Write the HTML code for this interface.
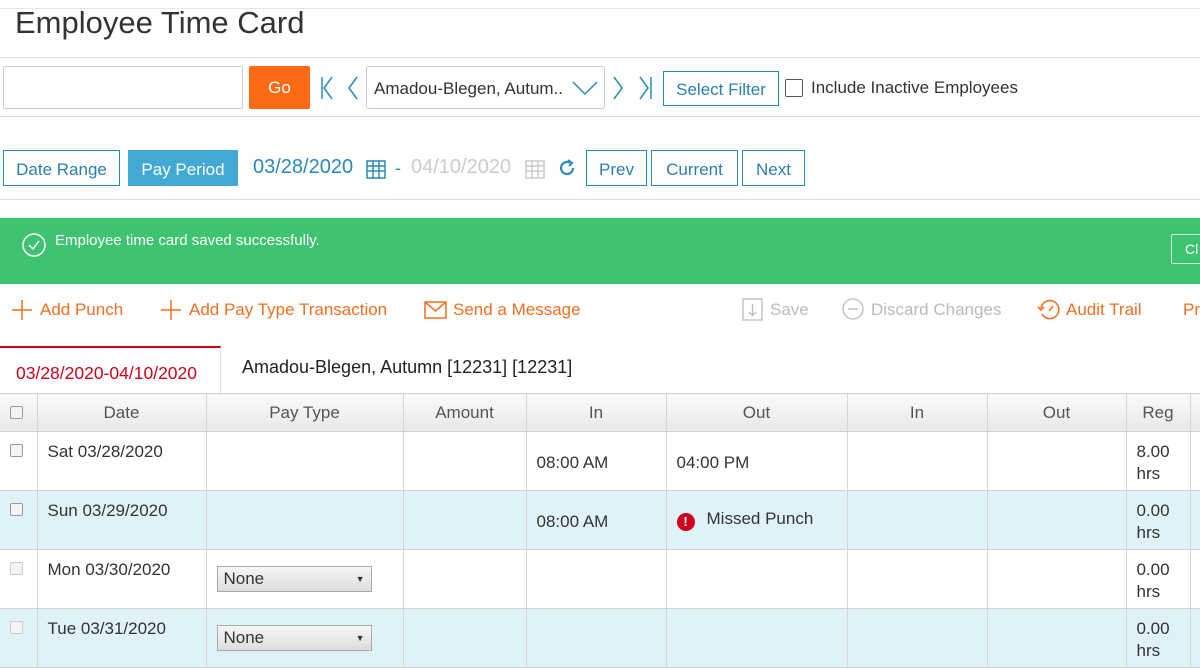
<!DOCTYPE html>
<html><head><style>
*{box-sizing:border-box;margin:0;padding:0}
body{width:1200px;height:669px;overflow:hidden;background:#fff;font-family:"Liberation Sans",sans-serif;position:relative;color:#333}
.a{position:absolute}
.btn{position:absolute;border:1px solid #2a8ab6;color:#2a7fab;font-size:17px;display:flex;align-items:center;justify-content:center;background:#fff;padding-top:3px}
.o{color:#f36f21;font-size:17px;position:absolute;top:300px}
.g{color:#bbb;font-size:17px;position:absolute;top:300px}
table{position:absolute;left:0;top:393px;border-collapse:collapse;width:1200px;table-layout:fixed}
td,th{border:1px solid #d4d4d4;font-size:17px;font-weight:normal;vertical-align:top;padding:9px 10px 0;line-height:22px}
th{height:38px;background:linear-gradient(#fafafa,#e8e8e8);color:#555;text-align:center;vertical-align:middle;padding:0;font-size:17px}
td{height:59px;color:#333}
tr.b td{background:#dff2f8}
.cb{width:13px;height:13px;border:1px solid #999;border-radius:2px;background:#f4f4f4;display:inline-block}
.sel{display:block;width:155px;height:26px;border:1px solid #aaa;background:linear-gradient(#f6f6f6,#ddd);font-size:17px;padding:1px 6px;position:relative;margin-top:7px}
.sel:after{content:"▼";position:absolute;right:6px;top:1px;font-size:9px}
</style></head><body>
<div class="a" style="left:0;top:8px;width:1200px;border-top:1px solid #e5e5e5"></div>
<div class="a" style="left:15px;top:5px;font-size:31px;color:#333">Employee Time Card</div>
<div class="a" style="left:0;top:57px;width:1200px;border-top:1px solid #ddd"></div>
<div class="a" style="left:3px;top:66px;width:240px;height:43px;border:1px solid #ccc;border-radius:2px"></div>
<div class="a" style="left:249px;top:66px;width:61px;height:43px;background:#ff6a13;color:#fff;font-size:17px;display:flex;align-items:center;justify-content:center;border-radius:2px">Go</div>
<svg class="a" style="left:318px;top:76px" width="44" height="24" fill="none" stroke="#2a8ab6" stroke-width="1.5"><path d="M4 1v22M14 1L6 12l8 11M39 1L31 12l8 11"/></svg>
<div class="a" style="left:366px;top:66px;width:239px;height:43px;border:1px solid #ccc;border-radius:3px;font-size:17px;padding:12px 7px;color:#333">Amadou-Blegen, Autum..</div>
<svg class="a" style="left:572px;top:80px" width="26" height="16" fill="none" stroke="#2a8ab6" stroke-width="1.5"><path d="M1 2l12 12 12-12"/></svg>
<svg class="a" style="left:610px;top:76px" width="44" height="24" fill="none" stroke="#2a8ab6" stroke-width="1.5"><path d="M4 1l8 11-8 11M30 1l8 11-8 11M41 1v22"/></svg>
<div class="btn" style="left:663px;top:71px;width:116px;height:35px">Select Filter</div>
<div class="a" style="left:785px;top:79px;width:18px;height:18px;border:1.5px solid #555;border-radius:2px"></div>
<div class="a" style="left:811px;top:78px;font-size:17px;color:#333">Include Inactive Employees</div>
<div class="a" style="left:0;top:116px;width:1200px;border-top:1px solid #ddd"></div>
<div class="btn" style="left:3px;top:150px;width:117px;height:36px">Date Range</div>
<div class="btn" style="left:128px;top:150px;width:110px;height:36px;background:#42a9d4;border-color:#42a9d4;color:#fff">Pay Period</div>
<div class="a" style="left:253px;top:156px;font-size:20px;color:#2a8ab6">03/28/2020</div>
<svg class="a" style="left:366px;top:159px" width="20" height="20" fill="none" stroke="#2a8ab6" stroke-width="1.5"><rect x="1" y="2" width="18" height="17"/><path d="M1 7h18M1 12h18M7 2v17M13 2v17"/></svg>
<div class="a" style="left:395px;top:158px;font-size:18px;color:#2a8ab6">-</div>
<div class="a" style="left:411px;top:156px;font-size:20px;color:#ccc">04/10/2020</div>
<svg class="a" style="left:525px;top:159px" width="20" height="20" fill="none" stroke="#ccc" stroke-width="1.5"><rect x="1" y="2" width="18" height="17"/><path d="M1 7h18M1 12h18M7 2v17M13 2v17"/></svg>
<svg class="a" style="left:557px;top:158px" width="20" height="20" fill="none" stroke="#2a8ab6" stroke-width="2.2"><path d="M16 10a6 6 0 1 1-3-5.2"/><path d="M11 2l4 3-3 3" stroke-width="2"/></svg>
<div class="btn" style="left:586px;top:150px;width:61px;height:36px">Prev</div>
<div class="btn" style="left:651px;top:150px;width:87px;height:36px">Current</div>
<div class="btn" style="left:742px;top:150px;width:63px;height:36px">Next</div>
<div class="a" style="left:0;top:199px;width:1200px;border-top:1px solid #ddd"></div>
<div class="a" style="left:0;top:218px;width:1200px;height:66px;background:#3ec370"></div>
<svg class="a" style="left:22px;top:233px" width="24" height="24" fill="none" stroke="#fff" stroke-width="1.5"><circle cx="12" cy="12" r="11"/><path d="M7 12l4 4 6-8"/></svg>
<div class="a" style="left:55px;top:232px;font-size:15px;color:#fff">Employee time card saved successfully.</div>
<div class="a" style="left:1171px;top:234px;width:40px;height:30px;border:1px solid #d0f0dc;border-radius:2px;color:#fff;font-size:14px;padding:6px 13px">Cl</div>
<svg class="a" style="left:10px;top:298px" width="24" height="24" stroke="#f36f21" stroke-width="1.5"><path d="M12 2v20M2 12h20"/></svg>
<div class="o" style="left:40px">Add Punch</div>
<svg class="a" style="left:159px;top:298px" width="24" height="24" stroke="#f36f21" stroke-width="1.5"><path d="M12 2v20M2 12h20"/></svg>
<div class="o" style="left:189px">Add Pay Type Transaction</div>
<svg class="a" style="left:424px;top:301px" width="24" height="18" fill="none" stroke="#f36f21" stroke-width="1.5"><rect x="1" y="1" width="21" height="16"/><path d="M1 1l10.5 9L22 1"/></svg>
<div class="o" style="left:453px">Send a Message</div>
<svg class="a" style="left:742px;top:298px" width="22" height="23" fill="none" stroke="#bbb" stroke-width="1.3"><rect x="1" y="1" width="19" height="21"/><path d="M10.5 6v11M7 14l3.5 3.5L14 14"/></svg>
<div class="g" style="left:770px">Save</div>
<svg class="a" style="left:842px;top:298px" width="22" height="22" fill="none" stroke="#bbb" stroke-width="1.3"><circle cx="11" cy="11" r="10"/><path d="M6 11h10"/></svg>
<div class="g" style="left:871px">Discard Changes</div>
<svg class="a" style="left:1037px;top:298px" width="24" height="24" fill="none" stroke="#f36f21" stroke-width="1.6"><path d="M4 10a9 9 0 1 1 1 6"/><path d="M1 9l3 3 3-3M12 13l4-5"/></svg>
<div class="o" style="left:1066px">Audit Trail</div>
<div class="o" style="left:1183px">Pr</div>
<div class="a" style="left:0;top:346px;width:221px;height:47px;border-top:2px solid #d0021b;border-right:1px solid #ddd;color:#d0021b;font-size:17.5px;padding:15px 0 0 16px">03/28/2020-04/10/2020</div>
<div class="a" style="left:242px;top:357px;font-size:18px;color:#222">Amadou-Blegen, Autumn [12231] [12231]</div>
<table>
<colgroup><col style="width:37px"><col style="width:169px"><col style="width:197px"><col style="width:123px"><col style="width:140px"><col style="width:181px"><col style="width:140px"><col style="width:139px"><col style="width:64px"><col style="width:10px"></colgroup>
<tr><th style="text-align:left;padding-left:10px;vertical-align:top;padding-top:9px;border-left:none"><span class="cb"></span></th><th>Date</th><th>Pay Type</th><th>Amount</th><th>In</th><th>Out</th><th>In</th><th>Out</th><th>Reg</th><th></th></tr>
<tr><td style="border-left:none"><span class="cb"></span></td><td>Sat 03/28/2020</td><td></td><td></td><td style="padding-top:20px">08:00 AM</td><td style="padding-top:20px">04:00 PM</td><td></td><td></td><td>8.00<br>hrs</td><td></td></tr>
<tr class="b"><td style="border-left:none"><span class="cb"></span></td><td>Sun 03/29/2020</td><td></td><td></td><td style="padding-top:20px">08:00 AM</td><td style="padding-top:17px"><span style="display:inline-block;width:18px;height:18px;border-radius:50%;background:#d0021b;color:#fff;font-size:13px;font-weight:bold;text-align:center;line-height:18px;vertical-align:-2px;margin-right:12px">!</span>Missed Punch</td><td></td><td></td><td>0.00<br>hrs</td><td></td></tr>
<tr><td style="border-left:none"><span class="cb" style="border-color:#ccc"></span></td><td>Mon 03/30/2020</td><td><span class="sel">None</span></td><td></td><td></td><td></td><td></td><td></td><td>0.00<br>hrs</td><td></td></tr>
<tr class="b"><td style="border-left:none"><span class="cb" style="border-color:#ccc"></span></td><td>Tue 03/31/2020</td><td><span class="sel">None</span></td><td></td><td></td><td></td><td></td><td></td><td>0.00<br>hrs</td><td></td></tr>
</table>
</body></html>
